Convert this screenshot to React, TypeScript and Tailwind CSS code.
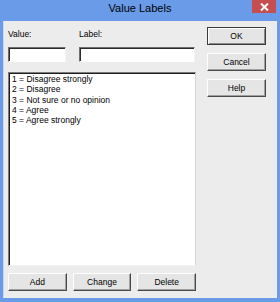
import React from 'react'

const font = { fontFamily: '"Liberation Sans", Arial, sans-serif' }

function Btn({ label, primary }: { label: string; primary?: boolean }) {
  return (
    <div
      className={`flex h-[18px] w-[59px] items-center justify-center border bg-[#e5e5e5] text-[8.5px] leading-none text-black ${
        primary
          ? 'border-[#3c3c3c] shadow-[inset_1px_1px_0_#ffffff,inset_-1px_-1px_0_#8a8a8a]'
          : 'border-t-white border-l-white border-r-[#4a4a4a] border-b-[#4a4a4a] shadow-[inset_-1px_-1px_0_#a0a0a0]'
      }`}
    >
      {label}
    </div>
  )
}

function Field({ width }: { width: string }) {
  return (
    <div
      className={`${width} h-[15px] border-t border-l border-t-[#6e6e6e] border-l-[#6e6e6e] border-r border-b border-r-[#f4f4f4] border-b-white bg-white shadow-[inset_1px_1px_0_#2a2a2a]`}
    />
  )
}

const items = [
  '1 = Disagree strongly',
  '2 = Disagree',
  '3 = Not sure or no opinion',
  '4 = Agree',
  '5 = Agree strongly',
]

export default function App() {
  return (
    <div className="flex h-[302px] w-[280px] flex-col bg-[#6a9be8] px-[3px] pb-[4px]" style={font}>
      {/* Title bar */}
      <div className="relative flex h-[21px] shrink-0 justify-center">
        <span className="pt-[2px] text-[11px] leading-[13px] text-black">Value Labels</span>
        <div className="absolute right-[1px] top-0 flex h-[13px] w-[24px] items-center justify-center bg-[#c74e4e]">
          <svg width="9" height="8" viewBox="0 0 9 8">
            <path d="M1 0.5 L8 7.5 M8 0.5 L1 7.5" stroke="#ffffff" strokeWidth="2" />
          </svg>
        </div>
      </div>

      {/* Body */}
      <div className="flex flex-1 gap-[11px] border-l border-[#c9d9f5] bg-[#ececec] pl-[4px] text-[8.5px] text-black">
        <div className="flex w-[188px] flex-col">
          <div className="mt-[8px] flex gap-[13px]">
            <div className="flex w-[58px] flex-col">
              <span className="leading-[10px]">Value:</span>
              <div className="mt-[8px]">
                <Field width="w-[58px]" />
              </div>
            </div>
            <div className="flex w-[116px] flex-col">
              <span className="leading-[10px]">Label:</span>
              <div className="mt-[8px]">
                <Field width="w-[116px]" />
              </div>
            </div>
          </div>

          <div className="mt-[10px] flex h-[194px] w-[188px] flex-col border-t border-l border-t-[#7a7a7a] border-l-[#7a7a7a] border-r border-b border-r-[#d6d6d6] border-b-[#f2f2f2] bg-white pl-[3px] pt-[1px] shadow-[inset_1px_1px_0_#1e1e1e]">
            {items.map((t) => (
              <div key={t} className="leading-[10.3px]">
                {t}
              </div>
            ))}
          </div>

          <div className="mt-[7px] flex gap-[6px]">
            <Btn label="Add" />
            <Btn label="Change" />
            <Btn label="Delete" />
          </div>
        </div>

        <div className="mt-[6px] flex flex-col gap-[8px]">
          <Btn label="OK" primary />
          <Btn label="Cancel" />
          <Btn label="Help" />
        </div>
      </div>
    </div>
  )
}
